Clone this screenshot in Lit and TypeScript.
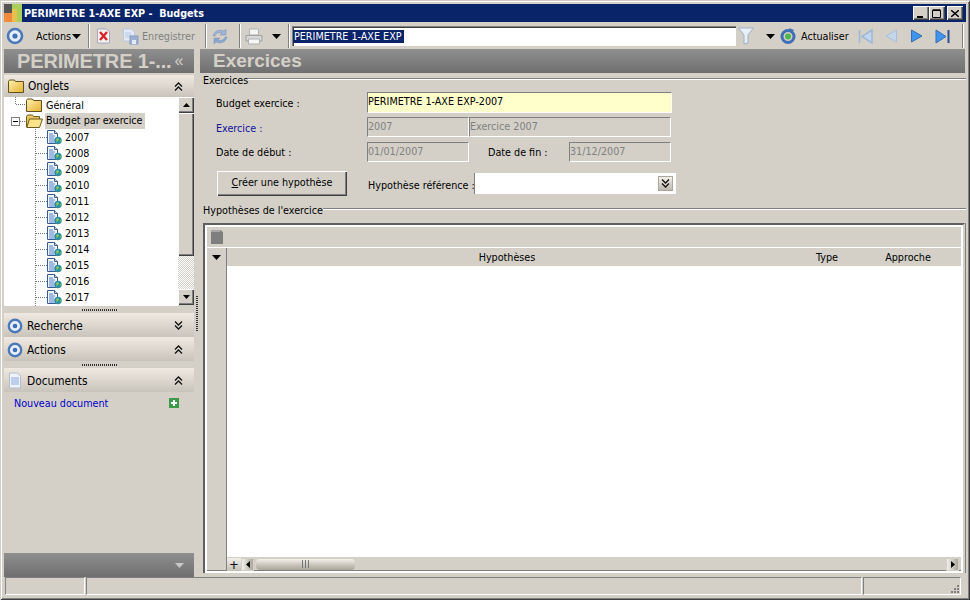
import { LitElement, html, css, svg } from "lit";
import { customElement } from "lit/decorators.js";

const target = (s = 18) => html`<svg width=${s} height=${s} viewBox="0 0 18 18"><circle cx="9" cy="9" r="7" fill="#e8eef8" stroke="#4a78b8" stroke-width="2.6"/><circle cx="9" cy="9" r="2.6" fill="#3f6fb5"/></svg>`;
const chev = (up: boolean) => html`<svg width="9" height="9" viewBox="0 0 9 9" fill="none" stroke="#111" stroke-width="1.3">${up
  ? svg`<path d="M1 4.5 4.5 1 8 4.5M1 8.5 4.5 5 8 8.5"/>`
  : svg`<path d="M1 .5 4.5 4 8 .5M1 4.5 4.5 8 8 4.5"/>`}</svg>`;
const caret = (c = "#000") => html`<svg width="9" height="5" viewBox="0 0 9 5"><path d="M0 0h9L4.5 5z" fill=${c}/></svg>`;
const folder = html`<svg width="16" height="14" viewBox="0 0 16 14"><defs><linearGradient id="fg" x1="0" y1="0" x2="1" y2="1"><stop offset="0" stop-color="#fff2b0"/><stop offset="1" stop-color="#e6b030"/></linearGradient></defs><path d="M.5 2.500 1.500 1h5l1 1.500h8v11H.5z" fill="url(#fg)" stroke="#5e5020"/></svg>`;
const folderOpen = html`<svg width="17" height="14" viewBox="0 0 17 14"><path d="M.5 13V2.500L1.500 1h5l1 1.500h6V5" fill="#e9c65e" stroke="#6b5a1e"/><path d="M.8 13.500 3.500 5h13l-3 8.500z" fill="#fbe38c" stroke="#6b5a1e"/></svg>`;
const docGlobe = html`<svg width="15" height="15" viewBox="0 0 15 15"><path d="M.5.5h7l3 3v10H.5z" fill="#f2f6fd" stroke="#3a5a94"/><path d="M2 4h4M2 6h6M2 8h5M2 10h5M2 12h5" stroke="#4a7cc8"/><path d="M7.500.5v3h3" fill="#c9d8f0" stroke="#3a5a94"/><circle cx="11" cy="10.500" r="3.800" fill="#2f8fa0"/><path d="M9 8.500h3l-.5 2.500-2 1zM13 10l1.500.5-1 2z" fill="#7ec86a"/></svg>`;

@customElement("app-root")
export class AppRoot extends LitElement {
  static styles = css`
    :host { display: block; width: 970px; height: 600px; overflow: hidden; }
    * { box-sizing: border-box; }
    .win { width: 970px; height: 600px; padding: 4px; background: #d4d0c8; display: flex; flex-direction: column;
      box-shadow: inset 1px 1px 0 #d4d0c8, inset -1px -1px 0 #404040, inset 2px 2px 0 #fff, inset -2px -2px 0 #808080;
      font: 10.7px "DejaVu Sans Condensed", "DejaVu Sans", sans-serif; color: #000; white-space: nowrap; }
    svg { display: block; flex: none; }
    /* title */
    .title { height: 18px; flex: none; background: #0a246a; color: #fff; font-weight: bold; display: flex; align-items: center; white-space: pre; }
    .appicon { width: 18px; height: 18px; flex: none; margin-right: 2px; }
    .ttext { flex: 1; }
    .wbtns { display: flex; margin-right: 3px; }
    .wb { width: 16px; height: 14px; background: #d4d0c8; display: flex; align-items: center; justify-content: center;
      box-shadow: inset 1px 1px 0 #fff, inset -1px -1px 0 #404040, inset -2px -2px 0 #808080; }
    .wb.last { margin-left: 2px; }
    /* toolbar */
    .toolbar { height: 27px; flex: none; display: flex; align-items: center; padding-top: 1px; }
    .sep { width: 2px; height: 24px; flex: none; border-left: 1px solid #808080; border-right: 1px solid #fff; }
    .t1 { margin-left: 2px; } .t2 { margin-left: 12px; } .t3 { margin-left: 1px; } .t4 { margin-left: 7px; }
    .t5 { margin-left: 6px; } .t6 { margin-left: 11px; } .t7 { margin-left: 3px; } .t8 { margin-left: 10px; }
    .t9 { margin-left: 5px; } .t10 { margin-left: 11px; } .t11 { margin-left: 4px; } .t12 { margin-left: 9px; }
    .t12b { margin-left: 7px; } .t13 { margin-left: 2px; } .t14 { margin-left: 2px; } .t15 { margin-left: 12px; } .t16 { margin-left: 5px; }
    .t17 { margin-left: 5px; } .t18 { margin-left: 10px; } .t19 { margin-left: 12px; } .t20 { margin-left: 14px; }
    .t21 { margin-left: 12px; } .t22 { margin-left: 12px; }
    .w-act { width: 35px; flex: none; } .w-enr { width: 53px; flex: none; } .w-upd { width: 47px; flex: none; }
    .gray { color: #808080; }
    .search { width: 444px; height: 20px; background: #fff; flex: none; display: flex; align-items: center; padding-left: 1px;
      box-shadow: inset 1px 1px 0 #808080, inset 2px 2px 0 #404040, inset -1px -1px 0 #fff; }
    .sel { background: #0a246a; color: #fff; padding: 0 1px; width: 111px; }
    /* main */
    .main { flex: 1; display: flex; min-height: 0; }
    .left { width: 190px; flex: none; display: flex; flex-direction: column; }
    .vgrip { width: 6px; flex: none; display: flex; align-items: center; }
    .vgrip i { display: block; width: 2px; height: 35px; margin-left: 2px; background: repeating-linear-gradient(#333 0 1px, transparent 1px 2px); }
    .right { flex: 1; min-width: 0; display: flex; flex-direction: column; padding-right: 1px; }
    .bighead { height: 24px; flex: none; background: linear-gradient(#8f8f8f, #6f6f6f); color: #d4d0c8; font: bold 20px "Liberation Sans", sans-serif; display: flex; align-items: center; }
    .lh { padding-left: 13px; letter-spacing: -.15px; }
    .lh small { font-size: 16px; font-weight: normal; margin-left: 3px; }
    .rh { padding-left: 13px; font-size: 19px; }
    .phead { height: 24px; flex: none; display: flex; align-items: center; background: linear-gradient(#efe9e2, #c9c4bb); padding: 1px 11px 0 3px; font-size: 11.8px; }
    .phead svg:first-child { margin-right: 4px; }
    .phead span { flex: 1; }
    .p1 { height: 22px; margin-top: 2px; padding-left: 4px; padding-top: 0; }
    .p1 svg:first-child { margin-right: 4px; }
    /* tree */
    .tree { height: 209px; flex: none; display: flex; }
    .nodes { width: 174px; flex: none; background: #fff; overflow: hidden; }
    .row { height: 16px; display: flex; align-items: center; }
    .gen { padding-left: 11px; }
    .lines { width: 11px; height: 16px; flex: none; background:
      repeating-linear-gradient(90deg, #777 0 1px, transparent 1px 2px) 1px 7px / 10px 1px no-repeat,
      repeating-linear-gradient(#777 0 1px, transparent 1px 2px) 0 0 / 1px 8px no-repeat; }
    .budget { padding-left: 7px; }
    .box { width: 9px; height: 9px; flex: none; border: 1px solid #808080; background: #fff; display: flex; align-items: center; justify-content: center; }
    .box b { width: 5px; height: 1px; background: #000; display: block; }
    .dash { width: 6px; height: 1px; flex: none; background: repeating-linear-gradient(90deg, #777 0 1px, transparent 1px 2px); }
    .gen span { margin-left: 4px; }
    .budget span { background: #d4d0c8; height: 16px; line-height: 16px; padding-left: 1px; margin-left: 2px; width: 100px; flex: none; }
    .child { padding-left: 31px; }
    .cl { width: 12px; height: 16px; flex: none; background:
      repeating-linear-gradient(90deg, #777 0 1px, transparent 1px 2px) 1px 8px / 11px 1px no-repeat,
      repeating-linear-gradient(#777 0 1px, transparent 1px 2px) 0 0 / 1px 16px no-repeat; }
    .child span { margin-left: 3px; }
    .sb { width: 16px; flex: none; display: flex; flex-direction: column; }
    .sbtn { background: #d4d0c8; display: flex; align-items: center; justify-content: center; flex: none;
      box-shadow: inset 1px 1px 0 #fff, inset -1px -1px 0 #404040, inset -2px -2px 0 #808080; }
    .v { width: 16px; height: 16px; }
    .thumb { width: 16px; height: 143px; flex: none; background: #d4d0c8; box-shadow: inset 1px 1px 0 #fff, inset -1px -1px 0 #404040, inset -2px -2px 0 #808080; }
    .track { width: 16px; height: 33px; flex: none; background: repeating-conic-gradient(#d4d0c8 0 25%, #fff 0 50%) 0 0 / 2px 2px; }
    .hgrip { height: 7px; flex: none; display: flex; justify-content: center; align-items: center; }
    .hgrip i { display: block; width: 35px; height: 2px; background: repeating-linear-gradient(90deg, #333 0 1px, transparent 1px 2px); }
    .docs { height: 22px; flex: none; display: flex; align-items: center; padding: 0 15px 0 10px; color: #0000c8; justify-content: space-between; }
    .fill { flex: 1; }
    .foot { height: 24px; flex: none; background: linear-gradient(#8f8f8f, #6f6f6f); display: flex; justify-content: flex-end; align-items: center; padding-right: 10px; }
    /* form */
    .legend { display: flex; align-items: center; height: 13px; flex: none; margin-left: 3px; margin-right: -1px; }
    .legend span { padding-top: 1px; }
    .legend i { flex: 1; height: 2px; border-top: 1px solid #808080; border-bottom: 1px solid #fff; margin-top: -1px; }
    .form { flex: none; padding-left: 16px; height: 117px; }
    .frow { display: flex; align-items: center; }
    .frow.a { height: 21px; margin-top: 6px; margin-bottom: 4px; }
    .frow.b { height: 20px; margin-bottom: 5px; }
    .frow.d { height: 25px; margin-top: 9px; }
    .lab { width: 151px; flex: none; }
    .frow.b .lab { padding-top: 2px; }
    .frow.b.dt .lab { padding-top: 0; }
    .frow.a .lab { padding-top: 1px; }
    .blue { color: #10109c; }
    .fld { height: 20px; flex: none; padding: 0; line-height: 18px; color: #808080; border: 1px solid; border-color: #808080 #fff #fff #808080; }
    .ylw { width: 305px; height: 21px; background: #ffffcc; color: #000; }
    .f102 { width: 102px; } .f202 { width: 202px; }
    .lab2 { margin-left: 19px; width: 81px; flex: none; }
    .btn { width: 130px; height: 25px; flex: none; margin-left: 1px; display: flex; align-items: center; justify-content: center; background: #d4d0c8;
      box-shadow: inset 1px 1px 0 #fff, inset -1px -1px 0 #404040, inset -2px -2px 0 #808080; padding-bottom: 2px; }
    .btn u { text-decoration: underline; }
    .lab3 { margin-left: 21px; width: 106px; flex: none; padding-top: 3px; }
    .combo { width: 202px; height: 21px; flex: none; background: #fff; display: flex; align-items: center; justify-content: flex-end; padding-right: 3px; border-left: 1px solid #808080; }
    .cbtn { width: 15px; height: 15px; background: linear-gradient(#f4f1ec, #bdb8ae); border: 1px solid #aaa69c; display: flex; align-items: center; justify-content: center; }
    /* table */
    .table { flex: 1; min-height: 0; margin: 7px 0 4px 3px; display: flex; flex-direction: column; padding: 2px 2px 2px 2px; background: #fff;
      border: 2px solid; border-color: #5f5f5f #d4d0c8 transparent #5f5f5f; border-bottom-width: 0; box-shadow: 1px 0 0 #808080; }
    .ttool { height: 21px; flex: none; background: #d4d0c8; padding: 2px 0 0 3px; border-bottom: 1px solid #fff; }
    .thead { height: 18px; flex: none; background: #d4d0c8; display: flex; align-items: center; text-align: center; }
    .corner { width: 20px; height: 18px; flex: none; display: flex; align-items: center; justify-content: center; border-right: 1px solid #808080; }
    .c1 { width: 560px; flex: none; } .c2 { width: 80px; flex: none; } .c3 { width: 82px; flex: none; }
    .tbody { flex: 1; min-height: 0; display: flex; }
    .rowhead { width: 20px; flex: none; background: #d4d0c8; border-right: 1px solid #808080; }
    .cells { flex: 1; background: #fff; }
    .hsb { height: 14px; flex: none; background: #d4d0c8; display: flex; align-items: center; box-shadow: inset 0 -1px 0 #808080; }
    .hsbhead { width: 20px; height: 14px; flex: none; border-right: 1px solid #808080; }
    .plus { width: 14px; height: 13px; flex: none; text-align: center; font-size: 13px; line-height: 13px; background: linear-gradient(#f2efea, #c4c0b6); }
    .hb { width: 13px; height: 13px; background: linear-gradient(90deg, #f2efea, #aaa69c); display: flex; align-items: center; justify-content: center; border: 1px solid #d4d0c8; flex: none; }
    .hthumb { width: 99px; height: 11px; margin-left: 2px; flex: none; border-radius: 4px; background: linear-gradient(#f5f2ec, #ccc8bf 50%, #a9a59b); display: flex; align-items: center; justify-content: center; gap: 2px; }
    .hthumb i { display: block; width: 1px; height: 8px; background: #777; }
    .htrack { flex: 1; }
    .r1 { margin-right: 2px; }
    /* status */
    .status { height: 19px; flex: none; display: flex; gap: 1px; padding-right: 5px; padding-left: 1px; }
    .st { height: 18px; border: 1px solid; border-color: #808080 #fff #fff #808080; }
    .s1 { width: 80px; } .s2 { width: 776px; } .s3 { flex: 1; display: flex; align-items: flex-end; justify-content: flex-end; }
  `;

  render() {
    const years = [2007, 2008, 2009, 2010, 2011, 2012, 2013, 2014, 2015, 2016, 2017];
    return html`<div class="win">
      <div class="title">
        <svg class="appicon" viewBox="0 0 18 18"><rect width="8" height="9" fill="#555"/><rect y="9" width="8" height="9" fill="#f08a3c"/><rect x="8" width="10" height="18" fill="#a8cf5a"/><rect x="8" y="5" width="5" height="13" fill="#e8c050"/></svg>
        <span class="ttext">PERIMETRE 1-AXE EXP -  Budgets</span>
        <div class="wbtns">
          <div class="wb"><svg width="8" height="9" viewBox="0 0 8 9"><path d="M0 7h6v2H0z" fill="#000"/></svg></div>
          <div class="wb"><svg width="10" height="9" viewBox="0 0 10 9" fill="none" stroke="#000"><path d="M.5 1.500h8v7h-8zM.5 .8h8"/></svg></div>
          <div class="wb last"><svg width="8" height="7" viewBox="0 0 8 7" fill="none" stroke="#000" stroke-width="1.400"><path d="M0 0l8 7M8 0 0 7"/></svg></div>
        </div>
      </div>
      <div class="toolbar">
        <span class="t1">${target(18)}</span>
        <span class="t2 w-act">Actions</span>
        <span class="t3">${caret()}</span>
        <span class="sep t4"></span>
        <svg class="t5" width="15" height="16" viewBox="0 0 15 16"><path d="M1.500 1h9l3 3v11h-12z" fill="#f4f2f0" stroke="#a8a8b8"/><path d="M4 4l7 8M11 4l-7 8" stroke="#d8242a" stroke-width="2.400"/></svg>
        <svg class="t6" width="17" height="17" viewBox="0 0 17 17"><path d="M1.500 1h8l3 3v9h-11z" fill="#e4ebf6" stroke="#b9c6dc"/><path d="M3 5h6M3 7h7M3 9h5" stroke="#b8c8e4"/><rect x="8" y="8" width="8" height="8" fill="#9bb0d4" stroke="#8a9cc0"/><rect x="10" y="12" width="4" height="4" fill="#e4ebf6"/></svg>
        <span class="t7 gray w-enr">Enregistrer</span>
        <span class="sep t8"></span>
        <svg class="t9" width="16" height="17" viewBox="0 0 16 17"><path d="M1 8C2 3 7 1 12 3l2-2v6H8l2-2C7 4 4 5 3 8z" fill="#9fb6d6" stroke="#7f96ba" stroke-width=".6"/><path d="M15 9c-1 5-6 7-11 5l-2 2v-6h6l-2 2c3 1 6 0 7-3z" fill="#88a8cc" stroke="#7f96ba" stroke-width=".6"/></svg>
        <span class="sep t10"></span>
        <svg class="t11" width="18" height="17" viewBox="0 0 18 17"><path d="M4.500 1h9v6h-9z" fill="#f4f4f4" stroke="#b0b0b0"/><path d="M1 7.500h16V13H1z" fill="#d8d8d8" stroke="#a0a0a0"/><path d="M3.500 11h11v5h-11z" fill="#f6f6f6" stroke="#b0b0b0"/></svg>
        <span class="t12">${caret()}</span>
        <span class="sep t12b"></span>
        <div class="search t14"><span class="sel">PERIMETRE 1-AXE EXP</span></div>
        <svg class="t13" width="16" height="18" viewBox="0 0 16 18"><path d="M.5 1h15L10 8v8l-4 1V8z" fill="#e8eef6" stroke="#9cb0c8"/></svg>
        <span class="t15">${caret()}</span>
        <svg class="t16" width="16" height="16" viewBox="0 0 16 16"><circle cx="8" cy="8.500" r="6" fill="none" stroke="#3f6fb5" stroke-width="3"/><circle cx="8" cy="8.500" r="3" fill="#4fb84a"/><path d="M9 0l5 2-3 3z" fill="#3f6fb5"/></svg>
        <span class="t17 w-upd">Actualiser</span>
        <svg class="t18" width="15" height="15" viewBox="0 0 15 15"><path d="M1.500 1v13M14 1 4 7.500 14 14z" fill="#c4d6ec" stroke="#9db8d8" stroke-width="1.500"/></svg>
        <svg class="t19" width="12" height="14" viewBox="0 0 12 14"><path d="M11.500 1 1 7l10.500 6z" fill="#c4d6ec" stroke="#a8c0dc"/></svg>
        <svg class="t20" width="12" height="14" viewBox="0 0 12 14"><path d="M.5 1 11 7 .5 13z" fill="#3c96f0" stroke="#3a6cb0"/></svg>
        <svg class="t21" width="15" height="15" viewBox="0 0 15 15"><path d="M1 1l10 6.500L1 14z" fill="#3c96f0" stroke="#3a6cb0"/><path d="M13.500 1v13" stroke="#2a4f90" stroke-width="2"/></svg>
        <span class="sep t22"></span>
      </div>
      <div class="main">
        <div class="left">
          <div class="bighead lh">PERIMETRE 1-...<small>«</small></div>
          <div class="phead p1">${folder}<span>Onglets</span>${chev(true)}</div>
          <div class="tree">
            <div class="nodes">
              <div class="row gen"><i class="lines"></i>${folder}<span>Général</span></div>
              <div class="row budget"><i class="box"><b></b></i><i class="dash"></i>${folderOpen}<span>Budget par exercice</span></div>
              ${years.map((y) => html`<div class="row child"><i class="cl"></i>${docGlobe}<span>${y}</span></div>`)}
              <div class="row child"><i class="cl"></i>${docGlobe}</div>
            </div>
            <div class="sb">
              <div class="sbtn v"><svg width="7" height="4" viewBox="0 0 7 4"><path d="M3.500 0 7 4H0z"/></svg></div>
              <div class="thumb"></div>
              <div class="track"></div>
              <div class="sbtn v"><svg width="7" height="4" viewBox="0 0 7 4"><path d="M0 0h7L3.500 4z"/></svg></div>
            </div>
          </div>
          <div class="hgrip"><i></i></div>
          <div class="phead">${target(16)}<span>Recherche</span>${chev(false)}</div>
          <div class="phead">${target(16)}<span>Actions</span>${chev(true)}</div>
          <div class="hgrip"><i></i></div>
          <div class="phead"><svg width="16" height="17" viewBox="0 0 16 17"><path d="M2.500 1h8l3 3v12h-11z" fill="#eef2fb" stroke="#b4bccb"/><path d="M4 6h8M4 8h8M4 10h8M4 12h8" stroke="#8ca8de"/></svg><span>Documents</span>${chev(true)}</div>
          <div class="docs">Nouveau document<svg width="10" height="10" viewBox="0 0 10 10"><rect width="10" height="10" fill="#3c9a4a"/><path d="M5 2v6M2 5h6" stroke="#fff" stroke-width="2"/></svg></div>
          <div class="fill"></div>
          <div class="foot">${caret("#c8c8c8")}</div>
        </div>
        <div class="vgrip"><i></i></div>
        <div class="right">
          <div class="bighead rh">Exercices</div>
          <div class="legend"><span>Exercices</span><i></i></div>
          <div class="form">
            <div class="frow a"><span class="lab">Budget exercice :</span><div class="fld ylw">PERIMETRE 1-AXE EXP-2007</div></div>
            <div class="frow b"><span class="lab blue">Exercice :</span><div class="fld f102">2007</div><div class="fld f202">Exercice 2007</div></div>
            <div class="frow b dt"><span class="lab">Date de début :</span><div class="fld f102">01/01/2007</div><span class="lab2">Date de fin :</span><div class="fld f102">31/12/2007</div></div>
            <div class="frow d"><div class="btn"><span><u>C</u>réer une hypothèse</span></div><span class="lab3">Hypothèse référence :</span><div class="combo"><div class="cbtn">${chev(false)}</div></div></div>
          </div>
          <div class="legend"><span>Hypothèses de l'exercice</span><i></i></div>
          <div class="table">
            <div class="ttool"><svg width="14" height="16" viewBox="0 0 14 16"><path d="M1 1h9l3 2v12H1z" fill="#7f7f7f"/><path d="M1 1h9v2H1z" fill="#a8a8a8"/></svg></div>
            <div class="thead"><div class="corner">${caret()}</div><div class="c1">Hypothèses</div><div class="c2">Type</div><div class="c3">Approche</div></div>
            <div class="tbody"><div class="rowhead"></div><div class="cells"></div></div>
            <div class="hsb"><div class="hsbhead"></div><div class="plus">+</div><div class="hb"><svg width="4" height="7" viewBox="0 0 4 7"><path d="M4 0v7L0 3.500z"/></svg></div><div class="hthumb"><i></i><i></i><i></i></div><div class="htrack"></div><div class="hb r1"><svg width="4" height="7" viewBox="0 0 4 7"><path d="M0 0v7l4-3.500z"/></svg></div></div>
          </div>
        </div>
      </div>
      <div class="status"><div class="st s1"></div><div class="st s2"></div><div class="st s3"><svg width="11" height="11" viewBox="0 0 11 11"><path d="M8 2h2v2H8zM5 5h2v2H5zM8 5h2v2H8zM2 8h2v2H2zM5 8h2v2H5zM8 8h2v2H8z" fill="#808080"/></svg></div></div>
    </div>`;
  }
}
